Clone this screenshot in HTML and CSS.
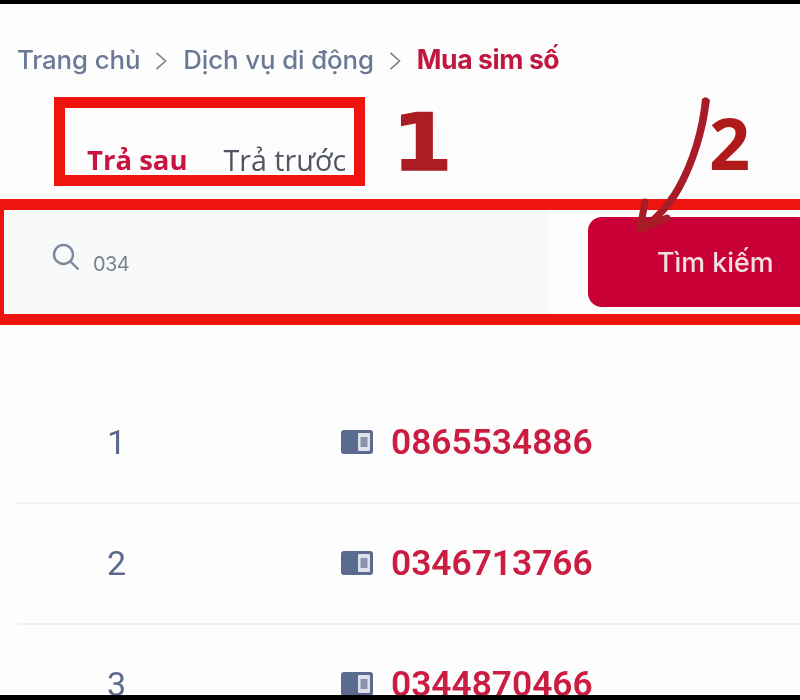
FILE: index.html
```html
<!DOCTYPE html>
<html lang="vi">
<head>
<meta charset="utf-8">
<title>Mua sim số</title>
<link rel="stylesheet" href="styles.css">
</head>
<body>
<div class="frame">
  <div class="bar-top"></div>
  <main class="content">
    <nav class="crumbs">
      <span>Trang chủ</span>
      <svg class="chev" viewBox="0 0 14 22"><path d="M2 2l10 9-10 9"/></svg>
      <span>Dịch vụ di động</span>
      <svg class="chev" viewBox="0 0 14 22"><path d="M2 2l10 9-10 9"/></svg>
      <span class="crumb-now">Mua sim số</span>
    </nav>
    <div class="tabs">
      <span class="tab tab-on">Trả sau</span>
      <span class="tab">Trả trước</span>
    </div>
    <div class="search">
      <div class="field">
        <svg class="mag" viewBox="0 0 28 28"><circle cx="11.5" cy="11.5" r="9.5"/><path d="M18.5 18.5l8 8"/></svg>
        <span class="query">034</span>
      </div>
      <div class="btn">Tìm kiếm</div>
    </div>
    <section class="list">
      <div class="row">
        <span class="idx">1</span>
        <svg class="sim" viewBox="0 0 32 24"><rect width="32" height="24" rx="3"/><rect class="sim-in" x="17" y="3" width="12" height="18" rx="1"/><rect class="sim-chip" x="19.500" y="7" width="7" height="10"/></svg>
        <span class="num">0865534886</span>
      </div>
      <div class="row">
        <span class="idx">2</span>
        <svg class="sim" viewBox="0 0 32 24"><rect width="32" height="24" rx="3"/><rect class="sim-in" x="17" y="3" width="12" height="18" rx="1"/><rect class="sim-chip" x="19.500" y="7" width="7" height="10"/></svg>
        <span class="num">0346713766</span>
      </div>
      <div class="row">
        <span class="idx">3</span>
        <svg class="sim" viewBox="0 0 32 24"><rect width="32" height="24" rx="3"/><rect class="sim-in" x="17" y="3" width="12" height="18" rx="1"/><rect class="sim-chip" x="19.500" y="7" width="7" height="10"/></svg>
        <span class="num">0344870466</span>
      </div>
    </section>
    <span class="mark mark-1">1</span>
    <span class="mark mark-2">2</span>
    <svg class="arrow" viewBox="0 0 800 700">
      <path class="arrow-fill" d="M702 99 C699 130 690 160 675 187 C665 204 653 217 640 226 L643 232 C658 222 672 208 682 190 C697 162 706 132 710 100 Q706 95 702 99Z"/>
      <path class="arrow-head" d="M645 202 L640 229 L667 218"/>
    </svg>
  </main>
  <div class="bar-bottom"></div>
</div>
</body>
</html>
```
FILE: styles.css
```css
* { box-sizing: border-box; }
html, body { margin: 0; padding: 0; }
body { background: #fdfdfd; font-family: "Inter", "Liberation Sans", sans-serif; }
.frame { width: 800px; height: 700px; display: flex; flex-direction: column; overflow: hidden; }
.bar-top { height: 4px; background: #000; flex: none; }
.bar-bottom { height: 5px; background: #000; flex: none; position: relative; z-index: 2; }
.content { flex: 1; min-height: 0; position: relative; overflow: hidden; }

.crumbs { display: flex; align-items: center; height: 40px; margin: 35px 0 0 17px; font-size: 25.8px; font-weight: 500; letter-spacing: -0.1px; color: #6b7896; filter: blur(0.6px); }
.chev { width: 14px; height: 20px; margin: 3px 15px 0 14px; fill: none; stroke: #7d8288; stroke-width: 1.8; }
.crumb-now { color: #c0163f; font-weight: 700; font-size: 26.5px; letter-spacing: -0.4px; }

.tabs { display: flex; align-items: flex-end; gap: 36px; width: 311px; height: 89px; margin: 18px 0 0 54px; padding: 0 0 0 22px; border: 11px solid #f0140f; font-family: "Open Sans", sans-serif; font-size: 27.5px; line-height: 30px; color: #4f5661; white-space: nowrap; }
.tab { filter: blur(0.6px); }
.tab + .tab { font-size: 28.6px; }
.tab-on { color: #c8143f; font-weight: 700; }

.search { display: flex; width: 830px; height: 126px; margin: 13px 0 0 -7px; border: 11px solid #f0140f; background: #fdfdfd; }
.field { width: 544px; display: flex; align-items: center; padding: 0 0 0 48px; background: #f8f9f9; }
.mag { width: 28px; height: 28px; margin-top: -10px; fill: none; stroke: #7f889a; stroke-width: 2.4; }
.query { margin: 3px 0 0 13px; font-size: 20px; letter-spacing: -0.6px; color: #7a8192; filter: blur(0.5px); }
.btn { flex: 1; height: 90px; margin: 7px 0 0 40px; padding: 0 0 0 69px; display: flex; align-items: center; border-radius: 14px; background: #c80036; color: #f2dfe3; font-size: 26.800px; font-weight: 500; filter: blur(0.5px); }

.list { margin: 58px 0 0 17px; }
.row { display: flex; align-items: center; height: 121px; padding: 0 0 2px 90px; border-bottom: 2px solid #f1f1f1; }
.idx { width: 234px; font-size: 34px; color: #5b6a8a; font-family: "Roboto", sans-serif; filter: blur(0.5px); }
.sim { width: 32px; height: 24px; flex: none; fill: #5b6a8f; }
.sim-in { fill: #dfe2ea; }
.sim-chip { fill: #8a93a9; }
.num { margin-left: 18px; font-family: "Roboto", sans-serif; font-weight: 600; font-size: 35.300px; color: #cb1c42; filter: blur(0.5px); }

.mark { position: absolute; line-height: 1; color: #ab1c25; font-weight: 700; }
.mark-1 { left: 392px; top: 100px; font-family: "DejaVu Sans", sans-serif; font-size: 79px; -webkit-text-stroke: 1.5px #ab1c25; transform: scaleX(1.1); transform-origin: left center; }
.mark-2 { left: 709px; top: 102px; font-family: "Open Sans", sans-serif; font-size: 72px; color: #b01a1a; }
.arrow { position: absolute; left: 0; top: -4px; width: 800px; height: 700px; pointer-events: none; }
.arrow-fill { fill: #a81c28; }
.arrow-head { fill: none; stroke: #a81c28; stroke-width: 7; stroke-linejoin: round; stroke-linecap: round; }
```
